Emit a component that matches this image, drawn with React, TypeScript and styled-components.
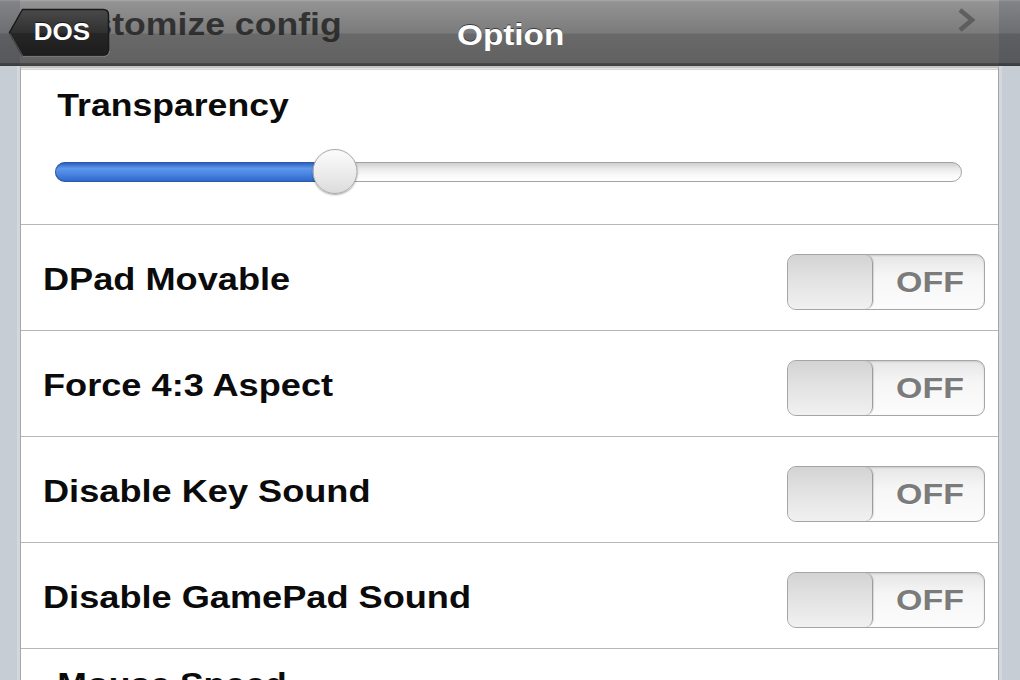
import React from "react";
import styled, { createGlobalStyle } from "styled-components";

const GlobalStyle = createGlobalStyle`
  html, body { margin: 0; padding: 0; }
  body {
    background: #c6cdd5;
    font-family: "Liberation Sans", Arial, Helvetica, sans-serif;
  }
`;

const Page = styled.div`
  width: 1020px;
  height: 680px;
  overflow: hidden;
  display: flex;
  flex-direction: column;
  background: #c6cdd5;
`;

const NavBar = styled.header`
  position: relative;
  height: 66px;
  flex: none;
  display: grid;
  grid-template-columns: 1fr;
  grid-template-rows: 1fr;
  background: linear-gradient(
    to bottom,
    #a9a9a9 0px,
    #939393 2px,
    #858585 20px,
    #7b7b7b 33px,
    #696969 34px,
    #616161 63px,
    #4a4a4a 63px,
    #3f3f3f 66px
  );
  &::before,
  &::after {
    content: "";
    position: absolute;
    top: 0;
    bottom: 0;
    background: rgba(20, 35, 55, 0.14);
  }
  &::before { left: 0; width: 20px; }
  &::after { right: 0; width: 21px; }
  & > * { grid-area: 1 / 1; }
`;

const GhostRow = styled.div`
  align-self: start;
  margin-top: 6px;
  padding: 0 45px 0 45px;
  display: flex;
  justify-content: space-between;
  align-items: flex-start;
  opacity: 0.8;
`;

const GhostText = styled.span`
  display: inline-block;
  transform: scaleX(1.13);
  transform-origin: left center;
  font-size: 31.5px;
  line-height: 36px;
  font-weight: 700;
  color: #1e1e1e;
`;

const Chevron = styled.svg`
  width: 18px;
  height: 26px;
  margin-top: 1px;
`;

const BackButton = styled.button`
  position: relative;
  z-index: 1;
  justify-self: start;
  align-self: start;
  margin: 8px 0 0 8px;
  width: 102px;
  height: 49px;
  padding: 0 3px 0 8px;
  border: 0;
  background: transparent;
  display: flex;
  align-items: center;
  justify-content: center;
  font-family: inherit;
  cursor: pointer;
`;

const BackShape = styled.svg`
  position: absolute;
  inset: 0;
  width: 102px;
  height: 49px;
`;

const BackLabel = styled.span`
  position: relative;
  display: inline-block;
  transform: scaleX(1.13);
  color: #ffffff;
  font-size: 23px;
  font-weight: 700;
  text-shadow: 0 -1px 0 rgba(0, 0, 0, 0.6);
`;

const Title = styled.h1`
  position: relative;
  z-index: 1;
  margin: 4px 0 0 0;
  justify-self: center;
  align-self: center;
  padding-left: 2px;
  transform: scaleX(1.13);
  color: #ffffff;
  font-size: 29.5px;
  font-weight: 700;
  text-shadow: 0 -1px 0 rgba(0, 0, 0, 0.55);
`;

const Body = styled.div`
  flex: 1;
  display: flex;
  min-height: 0;
`;

const Gutter = styled.div<{ $w: number }>`
  width: ${(p) => p.$w}px;
  flex: none;
  background: linear-gradient(to right, #c6cdd5 0, #c6cdd5 calc(100% - 3px), #d3d8de calc(100% - 3px));
`;

const RightGutter = styled(Gutter)`
  background: linear-gradient(to right, #d3d8de 0, #d3d8de 3px, #c6cdd5 3px);
`;

const Table = styled.main`
  flex: 1;
  background: #ffffff;
  border-left: 1px solid #a6a6a6;
  border-right: 1px solid #a6a6a6;
  border-top: 2px solid #c4c4c4;
  padding-top: 2px;
  box-shadow: inset 0 1px 0 #e6e6e6, inset 0 2px 0 #d6d6d6;
  display: flex;
  flex-direction: column;
`;

const SliderCell = styled.section`
  height: 155px;
  box-sizing: border-box;
  padding: 17px 36px 0 34px;
  border-bottom: 1px solid #b7b7b7;
  display: flex;
  flex-direction: column;
  flex: none;
`;

const SliderLabel = styled.div`
  padding-left: 2px;
  transform: scaleX(1.13);
  transform-origin: left center;
  font-size: 31.5px;
  line-height: 36px;
  font-weight: 700;
  color: #0b0b0b;
`;

const SliderWrap = styled.div`
  position: relative;
  margin-top: 26px;
  height: 46px;
  display: flex;
  align-items: center;
`;

const Track = styled.div`
  flex: 1;
  height: 20px;
  box-sizing: border-box;
  border-radius: 10px;
  border: 1px solid #a3a3a3;
  background: linear-gradient(to bottom, #cfcfcf 0, #ececec 35%, #fafafa 70%, #ffffff 100%);
`;

const Fill = styled.div`
  position: absolute;
  left: 0;
  top: 13px;
  height: 20px;
  box-sizing: border-box;
  border-radius: 10px 0 0 10px;
  border: 1px solid #2f58a6;
  border-right: 0;
  background: linear-gradient(to bottom, #2d5fc2 0, #5f98ea 30%, #4a86e2 60%, #2f68cd 100%);
`;

const Knob = styled.div`
  position: absolute;
  top: 0;
  width: 45px;
  height: 45px;
  box-sizing: border-box;
  transform: translateX(-50%);
  border-radius: 50%;
  border: 1px solid #a9a9a9;
  background: linear-gradient(to bottom, #fbfbfb 0, #ededed 50%, #dcdcdc 100%);
  box-shadow: 0 1px 2px rgba(0, 0, 0, 0.35);
`;

const Row = styled.div`
  height: 106px;
  box-sizing: border-box;
  flex: none;
  padding: 3px 13px 0 22px;
  border-bottom: 1px solid #b7b7b7;
  display: flex;
  align-items: center;
  justify-content: space-between;
`;

const RowLabel = styled.span`
  display: inline-block;
  transform: scaleX(1.13);
  transform-origin: left center;
  font-size: 32px;
  line-height: 36px;
  font-weight: 700;
  color: #0b0b0b;
`;

const Switch = styled.div`
  margin-top: 6px;
  width: 198px;
  height: 56px;
  box-sizing: border-box;
  border: 1px solid #a5a5a5;
  border-radius: 9px;
  overflow: hidden;
  display: flex;
  background: linear-gradient(to bottom, #e6e6e6 0, #f6f6f6 40%, #fcfcfc 100%);
  box-shadow: inset 0 1px 2px rgba(0, 0, 0, 0.12);
`;

const SwitchKnob = styled.div`
  width: 85px;
  flex: none;
  box-sizing: border-box;
  border-right: 1px solid #9d9d9d;
  border-radius: 8px;
  background: linear-gradient(to bottom, #d3d3d3 0, #e2e2e2 45%, #f1f1f1 100%);
  box-shadow: 1px 0 1px rgba(0, 0, 0, 0.12);
`;

const OffBox = styled.div`
  flex: 1;
  display: flex;
  align-items: center;
  justify-content: center;
  padding-left: 2px;
`;

const OffLabel = styled.span`
  display: inline-block;
  transform: scaleX(1.13);
  font-size: 30px;
  font-weight: 700;
  color: #7b7b7b;
  text-shadow: 0 1px 0 #ffffff;
`;

const toggles = [
  "DPad Movable",
  "Force 4:3 Aspect",
  "Disable Key Sound",
  "Disable GamePad Sound",
];

export default function App() {
  const transparency = 0.309;
  return (
    <>
      <GlobalStyle />
      <Page>
        <NavBar>
          <GhostRow>
            <GhostText>Customize config</GhostText>
            <Chevron viewBox="0 0 18 26">
              <polyline
                points="3,3 15,13 3,23"
                fill="none"
                stroke="#555"
                strokeWidth="4.5"
                strokeLinejoin="miter"
              />
            </Chevron>
          </GhostRow>
          <BackButton>
            <BackShape viewBox="0 0 102 49">
              <defs>
                <linearGradient id="bb" x1="0" y1="0" x2="0" y2="1">
                  <stop offset="0" stopColor="#4a4a4a" />
                  <stop offset="0.5" stopColor="#303030" />
                  <stop offset="0.52" stopColor="#262626" />
                  <stop offset="1" stopColor="#1d1d1d" />
                </linearGradient>
              </defs>
              <path
                d="M14.5 1.5 L95 1.5 Q100.5 1.5 100.5 7 L100.5 42 Q100.5 47.5 95 47.5 L14.5 47.5 L1.5 24.5 Z"
                fill="url(#bb)"
                stroke="#1a1a1a"
                strokeWidth="1.5"
              />
              <path
                d="M2 25.5 L15 48.3 L95 48.3 Q101 48.3 101.3 43"
                fill="none"
                stroke="rgba(255,255,255,0.28)"
                strokeWidth="1"
              />
            </BackShape>
            <BackLabel>DOS</BackLabel>
          </BackButton>
          <Title>Option</Title>
        </NavBar>
        <Body>
          <Gutter $w={20} />
          <Table>
            <SliderCell>
              <SliderLabel>Transparency</SliderLabel>
              <SliderWrap>
                <Track />
                <Fill style={{ width: `${transparency * 100}%` }} />
                <Knob style={{ left: `${transparency * 100}%` }} />
              </SliderWrap>
            </SliderCell>
            {toggles.map((t) => (
              <Row key={t}>
                <RowLabel>{t}</RowLabel>
                <Switch>
                  <SwitchKnob />
                  <OffBox>
                    <OffLabel>OFF</OffLabel>
                  </OffBox>
                </Switch>
              </Row>
            ))}
            <SliderCell>
              <SliderLabel>Mouse Speed</SliderLabel>
            </SliderCell>
          </Table>
          <RightGutter $w={21} />
        </Body>
      </Page>
    </>
  );
}
